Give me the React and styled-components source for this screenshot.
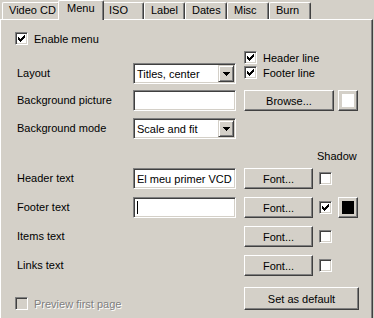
import React from 'react'
import styled, { createGlobalStyle } from 'styled-components'

const GlobalStyle = createGlobalStyle`
  html, body {
    margin: 0;
    padding: 0;
    background: #d4d0c8;
  }
  body {
    font-family: "Liberation Sans", Arial, sans-serif;
    font-size: 11px;
    color: #000;
  }
`

const Window = styled.div`
  width: 374px;
  height: 318px;
  overflow: hidden;
  background: #d4d0c8;
`

const TabStrip = styled.div`
  display: flex;
  align-items: flex-end;
  height: 19px;
  padding-left: 2px;
  position: relative;
  z-index: 1;
`

const Tab = styled.div`
  box-sizing: border-box;
  width: ${p => (p.$active ? p.$w + 4 : p.$w)}px;
  height: ${p => (p.$active ? '20px' : '17px')};
  margin: ${p => (p.$active ? '0 -2px -1px' : '0')};
  padding: ${p => (p.$active ? '1px 0 0 8px' : '1px 0 0 6px')};
  border: 1px solid #fff;
  border-bottom: none;
  border-right-color: #404040;
  border-radius: 2px 2px 0 0;
  box-shadow: inset -1px 0 #808080;
  background: #d4d0c8;
  position: relative;
  z-index: ${p => (p.$active ? 2 : 1)};
  line-height: 13px;
  white-space: nowrap;
`

const Panel = styled.div`
  box-sizing: border-box;
  width: 373px;
  height: 299px;
  border-top: 1px solid #fff;
  border-left: 1px solid #fff;
  border-right: 1px solid #404040;
  box-shadow: inset -1px 0 #808080;
  padding: 11px 0 0 14px;
  display: flex;
  flex-direction: column;
`

const FormRow = styled.div`
  display: grid;
  grid-template-columns: 118px 111px 75px 19px 20px;
  align-items: ${p => p.$align || 'center'};
  margin-top: ${p => p.$top || 0}px;
`

const FieldLabel = styled.span`
  padding-left: 2px;
  line-height: 21px;
  white-space: nowrap;
`

const CheckRow = styled.label`
  display: flex;
  align-items: center;
  gap: 6px;
  height: 15px;
  white-space: nowrap;
  color: ${p => (p.$disabled ? '#808080' : '#000')};
  text-shadow: ${p => (p.$disabled ? '1px 1px 0 #fff' : 'none')};
  grid-column: ${p => p.$span || 'auto'};
  margin-bottom: ${p => p.$mb || 0}px;
`

const Box = styled.span`
  box-sizing: border-box;
  width: 13px;
  height: 13px;
  flex-shrink: 0;
  border: 1px solid;
  border-color: #808080 #fff #fff #808080;
  box-shadow: inset 1px 1px #404040, inset -1px -1px #d4d0c8;
  background: ${p => (p.$disabled ? '#d4d0c8' : '#fff')};
  display: flex;
  align-items: center;
  justify-content: center;
`

const Field = styled.div`
  box-sizing: border-box;
  width: 103px;
  height: 21px;
  border: 1px solid;
  border-color: #808080 #fff #fff #808080;
  box-shadow: inset 1px 1px #404040, inset -1px -1px #d4d0c8;
  background: #fff;
  padding: 0 1px 0 3px;
  display: flex;
  align-items: center;
  white-space: nowrap;
  align-self: ${p => p.$self || 'auto'};
`

const Caret = styled.span`
  width: 1px;
  height: 13px;
  background: #000;
`

const DropButton = styled.span`
  box-sizing: border-box;
  margin-left: auto;
  width: 16px;
  height: 17px;
  border: 1px solid;
  border-color: #d4d0c8 #404040 #404040 #d4d0c8;
  box-shadow: inset 1px 1px #fff, inset -1px -1px #808080;
  background: #d4d0c8;
  display: flex;
  align-items: center;
  justify-content: center;
`

const PushButton = styled.button`
  box-sizing: border-box;
  width: ${p => p.$w}px;
  height: ${p => p.$h || 21}px;
  border: 1px solid;
  border-color: #fff #404040 #404040 #fff;
  box-shadow: inset -1px -1px #808080;
  background: #d4d0c8;
  font: inherit;
  color: #000;
  padding: 0;
  grid-column: ${p => p.$span || 'auto'};
  display: flex;
  align-items: center;
  justify-content: center;
`

const Swatch = styled.span`
  width: 12px;
  height: 13px;
  background: ${p => p.$color};
`

const RightStack = styled.div`
  grid-column: 3 / span 3;
  align-self: start;
  display: flex;
  flex-direction: column;
`

const ShadowCaption = styled.span`
  grid-column: 4 / span 2;
  margin-left: -2px;
  line-height: 15px;
`

const Check = () => (
  <svg width="7" height="7" viewBox="0 0 7 7" shapeRendering="crispEdges">
    <path
      d="M0 2h1v3H0zM1 3h1v3H1zM2 4h1v3H2zM3 3h1v3H3zM4 2h1v3H4zM5 1h1v3H5zM6 0h1v3H6z"
      fill="#000"
    />
  </svg>
)

const Arrow = () => (
  <svg width="7" height="4" viewBox="0 0 7 4" shapeRendering="crispEdges">
    <path d="M0 0h7v1H0zM1 1h5v1H1zM2 2h3v1H2zM3 3h1v1H3z" fill="#000" />
  </svg>
)

const CheckBox = ({ checked, disabled, children, span, mb }) => (
  <CheckRow $disabled={disabled} $span={span} $mb={mb}>
    <Box $disabled={disabled}>{checked && <Check />}</Box>
    {children}
  </CheckRow>
)

const Combo = ({ value }) => (
  <Field $self="end">
    {value}
    <DropButton>
      <Arrow />
    </DropButton>
  </Field>
)

const tabs = [
  { name: 'Video CD', w: 58 },
  { name: 'Menu', w: 42, active: true },
  { name: 'ISO', w: 42 },
  { name: 'Label', w: 41 },
  { name: 'Dates', w: 42 },
  { name: 'Misc', w: 42 },
  { name: 'Burn', w: 42 },
]

const App = () => {
  return (
    <Window>
      <GlobalStyle />
      <TabStrip>
        {tabs.map(t => (
          <Tab key={t.name} $w={t.w} $active={t.active}>
            {t.name}
          </Tab>
        ))}
      </TabStrip>

      <Panel>
        <CheckBox checked>Enable menu</CheckBox>

        <FormRow $top={4} $align="end" style={{ height: 34 }}>
          <FieldLabel>Layout</FieldLabel>
          <Combo value="Titles, center" />
          <RightStack>
            <CheckBox checked>Header line</CheckBox>
            <CheckBox checked>Footer line</CheckBox>
          </RightStack>
        </FormRow>

        <FormRow $top={6}>
          <FieldLabel>Background picture</FieldLabel>
          <Field />
          <PushButton $w={90} $span="3 / span 2">Browse...</PushButton>
          <PushButton $w={20}>
            <Swatch $color="#fff" />
          </PushButton>
        </FormRow>

        <FormRow $top={7}>
          <FieldLabel>Background mode</FieldLabel>
          <Combo value="Scale and fit" />
        </FormRow>

        <FormRow $top={10}>
          <ShadowCaption>Shadow</ShadowCaption>
        </FormRow>

        <FormRow $top={4}>
          <FieldLabel>Header text</FieldLabel>
          <Field>El meu primer VCD</Field>
          <PushButton $w={69}>Font...</PushButton>
          <Box />
        </FormRow>

        <FormRow $top={8}>
          <FieldLabel>Footer text</FieldLabel>
          <Field>
            <Caret />
          </Field>
          <PushButton $w={69}>Font...</PushButton>
          <Box>
            <Check />
          </Box>
          <PushButton $w={20}>
            <Swatch $color="#000" />
          </PushButton>
        </FormRow>

        <FormRow $top={8}>
          <FieldLabel>Items text</FieldLabel>
          <span />
          <PushButton $w={69}>Font...</PushButton>
          <Box />
        </FormRow>

        <FormRow $top={8}>
          <FieldLabel>Links text</FieldLabel>
          <span />
          <PushButton $w={69}>Font...</PushButton>
          <Box />
        </FormRow>

        <FormRow $top={11} $align="end">
          <CheckBox disabled span="1 / span 2" mb={-1}>
            Preview first page
          </CheckBox>
          <PushButton $w={115} $h={23} $span="3 / span 3">
            Set as default
          </PushButton>
        </FormRow>
      </Panel>
    </Window>
  )
}

export default App
